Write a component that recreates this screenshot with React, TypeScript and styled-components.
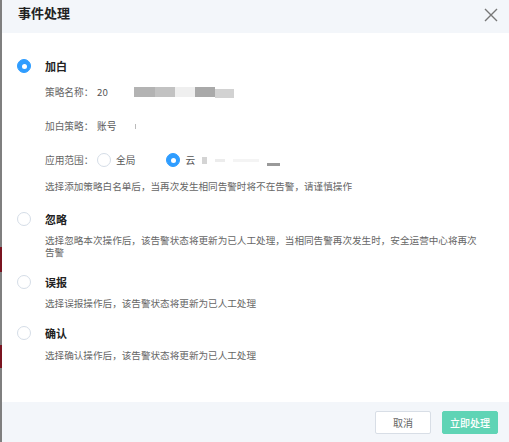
import styled, { createGlobalStyle } from 'styled-components';

const GlobalStyle = createGlobalStyle`
  html, body {
    margin: 0;
    padding: 0;
    background: #fff;
  }
  body {
    font-family: 'Noto Sans CJK SC', 'Noto Sans', sans-serif;
  }
`;

const Page = styled.div`
  display: flex;
  width: 509px;
  height: 442px;
  overflow: hidden;
`;

const Strip = styled.div`
  width: 2px;
  display: flex;
  flex-direction: column;
  background: #7f7f7f;
`;

const StripPart = styled.div<{ $h: number; $color: string }>`
  height: ${(p) => p.$h}px;
  background: ${(p) => p.$color};
  flex-shrink: 0;
`;

const Modal = styled.div`
  flex: 1;
  display: flex;
  flex-direction: column;
  background: #fff;
`;

const Header = styled.div`
  height: 33px;
  box-sizing: border-box;
  padding: 6px 11px 0 16px;
  display: flex;
  align-items: flex-start;
  justify-content: space-between;
  background: #f3f6fa;
`;

const Title = styled.div`
  font-size: 13px;
  line-height: 14px;
  font-weight: 700;
  color: #222;
`;

const CloseButton = styled.button`
  margin-top: 2px;
  width: 14px;
  height: 14px;
  padding: 0;
  border: none;
  background: none;
  display: flex;
  cursor: pointer;
`;

const Body = styled.div`
  flex: 1;
  padding: 26px 20px 0 15px;
  display: flex;
  flex-direction: column;
`;

const Option = styled.div<{ $mt: number }>`
  margin-top: ${(p) => p.$mt}px;
  display: flex;
  flex-direction: column;
`;

const OptionHead = styled.label`
  display: flex;
  align-items: center;
  gap: 14px;
  height: 14px;
`;

const Radio = styled.span<{ $checked?: boolean }>`
  position: relative;
  width: 14px;
  height: 14px;
  flex-shrink: 0;
  box-sizing: border-box;
  border-radius: 50%;
  border: 1px solid ${(p) => (p.$checked ? '#2f9dff' : '#d5dde7')};
  background: ${(p) => (p.$checked ? '#2f9dff' : '#fff')};
  &::after {
    content: '';
    display: ${(p) => (p.$checked ? 'block' : 'none')};
    position: absolute;
    left: 50%;
    top: 50%;
    width: 5px;
    height: 5px;
    margin: -2.5px 0 0 -2.5px;
    border-radius: 50%;
    background: #fff;
  }
`;

const OptionLabel = styled.span`
  font-size: 11px;
  line-height: 14px;
  font-weight: 700;
  color: #222;
`;

const OptionBody = styled.div`
  padding-left: 28px;
  display: flex;
  flex-direction: column;
`;

const Fields = styled.div`
  margin-top: 12px;
  display: flex;
  flex-direction: column;
  gap: 20px;
`;

const Field = styled.div`
  display: flex;
  align-items: center;
  height: 14px;
  font-size: 9.7px;
  color: #666;
`;

const FieldLabel = styled.span`
  width: 52px;
  flex-shrink: 0;
  color: #666;
`;

const FieldValue = styled.span`
  display: flex;
  align-items: center;
  color: #555;
`;

const Mosaic = styled.span`
  display: flex;
  margin-left: 26px;
  filter: blur(0.5px);
`;

const Tile = styled.span<{ $w: number; $h: number; $color: string; $dy?: number }>`
  display: inline-block;
  width: ${(p) => p.$w}px;
  height: ${(p) => p.$h}px;
  background: ${(p) => p.$color};
  margin-top: ${(p) => p.$dy ?? 0}px;
`;

const Tick = styled.span`
  display: inline-block;
  width: 1px;
  height: 5px;
  margin-left: 19px;
  background: #bbb;
`;

const Smudge = styled.span`
  display: flex;
  align-items: center;
  gap: 8px;
  margin-left: 2px;
  filter: blur(0.4px);
`;

const ScopeGroup = styled.div`
  display: flex;
  align-items: center;
  gap: 31px;
`;

const ScopeItem = styled.label`
  display: flex;
  align-items: center;
  gap: 5px;
  color: #555;
`;

const Desc = styled.div<{ $mt: number }>`
  margin-top: ${(p) => p.$mt}px;
  max-width: 438px;
  font-size: 9.6px;
  line-height: 12.5px;
  color: #666;
`;

const Footer = styled.div`
  height: 40px;
  box-sizing: border-box;
  padding-right: 11px;
  display: flex;
  align-items: center;
  justify-content: flex-end;
  gap: 11px;
  background: #f3f6fa;
`;

const Button = styled.button<{ $primary?: boolean }>`
  width: 56px;
  height: 23px;
  padding: 0;
  box-sizing: border-box;
  border-radius: 2px;
  font-family: inherit;
  font-size: 10px;
  font-weight: ${(p) => (p.$primary ? 500 : 400)};
  border: 1px solid ${(p) => (p.$primary ? '#5fd4b5' : '#d8dee6')};
  background: ${(p) => (p.$primary ? '#5fd4b5' : '#fff')};
  color: ${(p) => (p.$primary ? '#fff' : '#666')};
  cursor: pointer;
`;

const CloseIcon = () => (
  <svg width="14" height="14" viewBox="0 0 14 14">
    <path d="M1 1 L13 13 M13 1 L1 13" stroke="#777" strokeWidth="1.4" fill="none" />
  </svg>
);

const options = [
  { label: '忽略', mt: 19.5, descMt: 7.5, desc: '选择忽略本次操作后，该告警状态将更新为已人工处理，当相同告警再次发生时，安全运营中心将再次告警' },
  { label: '误报', mt: 16.5, descMt: 7.5, desc: '选择误报操作后，该告警状态将更新为已人工处理' },
  { label: '确认', mt: 17, descMt: 8.5, desc: '选择确认操作后，该告警状态将更新为已人工处理' },
];

export default function App() {
  return (
    <>
      <GlobalStyle />
      <Page>
        <Strip>
          <StripPart $h={247} $color="#7f7f7f" />
          <StripPart $h={25} $color="#7a1420" />
          <StripPart $h={73} $color="#7f7f7f" />
          <StripPart $h={23} $color="#7a1420" />
        </Strip>
        <Modal>
          <Header>
            <Title>事件处理</Title>
            <CloseButton aria-label="关闭">
              <CloseIcon />
            </CloseButton>
          </Header>
          <Body>
            <Option $mt={0}>
              <OptionHead>
                <Radio $checked />
                <OptionLabel>加白</OptionLabel>
              </OptionHead>
              <OptionBody>
                <Fields>
                  <Field>
                    <FieldLabel>策略名称：</FieldLabel>
                    <FieldValue>
                      20
                      <Mosaic>
                        <Tile $w={21} $h={10} $color="#b3b3b3" />
                        <Tile $w={20} $h={10} $color="#c2c2c2" />
                        <Tile $w={20} $h={10} $color="#efefef" />
                        <Tile $w={20} $h={10} $color="#a9a9a9" />
                        <Tile $w={19} $h={9} $color="#d2d2d2" $dy={2} />
                      </Mosaic>
                    </FieldValue>
                  </Field>
                  <Field>
                    <FieldLabel>加白策略：</FieldLabel>
                    <FieldValue>
                      账号
                      <Tick />
                    </FieldValue>
                  </Field>
                  <Field>
                    <FieldLabel>应用范围：</FieldLabel>
                    <ScopeGroup>
                      <ScopeItem>
                        <Radio />
                        全局
                      </ScopeItem>
                      <ScopeItem>
                        <Radio $checked />
                        云
                        <Smudge>
                          <Tile $w={5} $h={7} $color="#d4d4d4" />
                          <Tile $w={10} $h={3} $color="#ececec" />
                          <Tile $w={26} $h={3} $color="#f4f4f4" />
                          <Tile $w={13} $h={3} $color="#9a9a9a" $dy={8} />
                        </Smudge>
                      </ScopeItem>
                    </ScopeGroup>
                  </Field>
                </Fields>
                <Desc $mt={13}>选择添加策略白名单后，当再次发生相同告警时将不在告警，请谨慎操作</Desc>
              </OptionBody>
            </Option>
            {options.map((o) => (
              <Option key={o.label} $mt={o.mt}>
                <OptionHead>
                  <Radio />
                  <OptionLabel>{o.label}</OptionLabel>
                </OptionHead>
                <OptionBody>
                  <Desc $mt={o.descMt}>{o.desc}</Desc>
                </OptionBody>
              </Option>
            ))}
          </Body>
          <Footer>
            <Button>取消</Button>
            <Button $primary>立即处理</Button>
          </Footer>
        </Modal>
      </Page>
    </>
  );
}
